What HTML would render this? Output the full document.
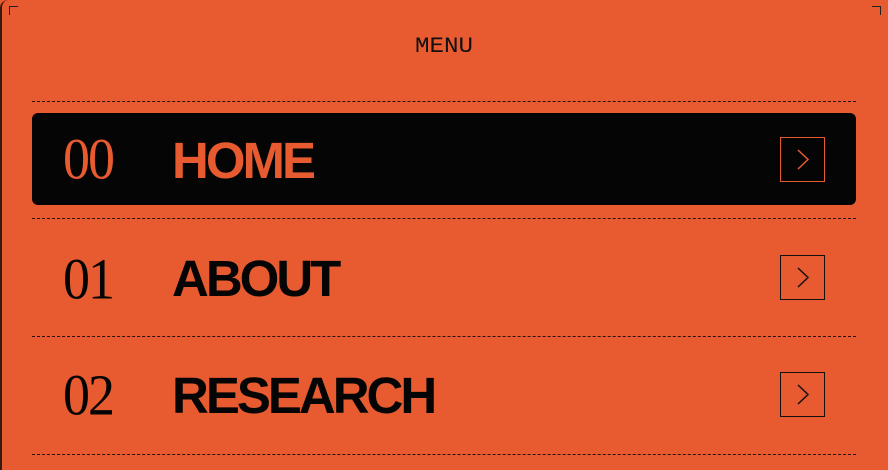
<!DOCTYPE html>
<html><head><style>
html,body{margin:0;padding:0;width:888px;height:458px;overflow:hidden;background:#E85A30}
.wrap{position:absolute;left:0;top:0;width:888px;height:470px;background:#E85A30;border-left:2px solid #3a1a10;border-radius:8px 8px 0 0;box-sizing:border-box}
.c{position:absolute;width:8px;height:8px;border-top:1.5px solid #222}
.menu{position:absolute;top:34px;left:-2px;width:888px;text-align:center;font:22px "Liberation Mono",monospace;color:#111;transform:scaleX(1.1)}
.dash{position:absolute;left:30px;width:824px;border-top:1px dashed #2a1008}
.row{position:absolute;left:30px;width:824px;height:92px}
.act{background:#050505;border-radius:6px}
.num{position:absolute;left:31px;font:54px "Liberation Serif",serif;line-height:1;letter-spacing:-2px;transform:scaleY(1.08);transform-origin:0 100%}
.lab{position:absolute;left:140px;font:bold 51px "Liberation Sans",sans-serif;letter-spacing:-3px;line-height:1}
.arr{position:absolute;left:748px;top:24px;width:43px;height:43px;border:1.5px solid #111}
.arr svg{position:absolute;left:0;top:0}
</style></head><body>
<div class="wrap">
<div class="c" style="left:7px;top:6px;border-left:1.5px solid #222"></div>
<div class="c" style="right:7px;top:6px;border-right:1.5px solid #222"></div>
<div class="menu">MENU</div>
<div class="dash" style="top:101px"></div>
<div class="row act" style="top:113px;color:#E85A30">
<div class="num" style="top:21px">00</div>
<div class="lab" style="top:22px">HOME</div>
<div class="arr" style="border-color:#E85A30"><svg width="43" height="43"><path d="M17 12 L27 21.5 L17 31" fill="none" stroke="#E85A30" stroke-width="1.5"/></svg></div>
</div>
<div class="dash" style="top:218px"></div>
<div class="row" style="top:231px;color:#050505">
<div class="num" style="top:23px">01</div>
<div class="lab" style="top:22px">ABOUT</div>
<div class="arr"><svg width="43" height="43"><path d="M17 12 L27 21.5 L17 31" fill="none" stroke="#111" stroke-width="1.5"/></svg></div>
</div>
<div class="dash" style="top:336px"></div>
<div class="row" style="top:348px;color:#050505">
<div class="num" style="top:22px">02</div>
<div class="lab" style="top:22px">RESEARCH</div>
<div class="arr"><svg width="43" height="43"><path d="M17 12 L27 21.5 L17 31" fill="none" stroke="#111" stroke-width="1.5"/></svg></div>
</div>
<div class="dash" style="top:454px"></div>
</div>
</body></html>
